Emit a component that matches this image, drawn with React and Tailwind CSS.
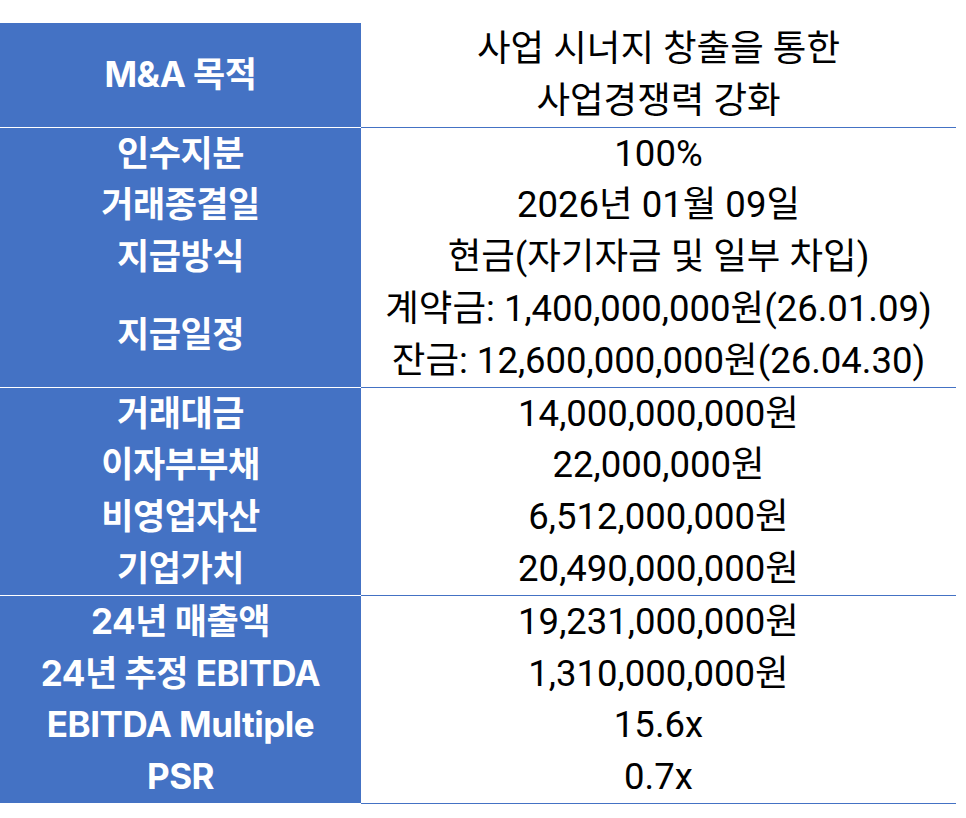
import React from "react";

const sections = [
  {
    label: ["M&A 목적"],
    labelMerged: true,
    values: ["사업 시너지 창출을 통한", "사업경쟁력 강화"],
  },
  {
    rows: [
      ["인수지분", ["100%"]],
      ["거래종결일", ["2026년 01월 09일"]],
      ["지급방식", ["현금(자기자금 및 일부 차입)"]],
      ["지급일정", ["계약금: 1,400,000,000원(26.01.09)", "잔금: 12,600,000,000원(26.04.30)"]],
    ],
  },
  {
    rows: [
      ["거래대금", ["14,000,000,000원"]],
      ["이자부부채", ["22,000,000원"]],
      ["비영업자산", ["6,512,000,000원"]],
      ["기업가치", ["20,490,000,000원"]],
    ],
  },
  {
    rows: [
      ["24년 매출액", ["19,231,000,000원"]],
      ["24년 추정 EBITDA", ["1,310,000,000원"]],
      ["EBITDA Multiple", ["15.6x"]],
      ["PSR", ["0.7x"]],
    ],
  },
];

const labelFont = { fontFamily: "Inter, 'Noto Sans CJK KR', sans-serif" };
const valueFont = { fontFamily: "Roboto, 'Noto Sans CJK KR', sans-serif" };

export default function App() {
  return (
    <div className="bg-white w-[966px] h-[818px] pt-[23px]">
      <div className="w-[956px] leading-[51.8px]">
        {sections.map((s, i) => (
          <div key={i} className="flex">
            <div className="w-[361px] shrink-0 border-b border-white flex flex-col bg-[#4472c4]">
              {s.labelMerged ? (
                <div
                  className="flex-1 flex items-center justify-center text-white font-bold text-[35px] tracking-[-0.5px]"
                  style={labelFont}
                >
                  {s.label[0]}
                </div>
              ) : (
                s.rows.map(([label, values]) => (
                  <div
                    key={label}
                    className="flex items-center justify-center text-white font-bold text-[35px] tracking-[-0.5px]"
                    style={{ ...labelFont, height: `${values.length * 51.8}px` }}
                  >
                    {label}
                  </div>
                ))
              )}
            </div>
            <div
              className="flex-1 border-b border-[#4472c4] flex flex-col items-center text-black text-[36.5px]"
              style={valueFont}
            >
              {(s.labelMerged ? s.values : s.rows.flatMap(([, v]) => v)).map((v) => (
                <div key={v} className="whitespace-nowrap">{v}</div>
              ))}
            </div>
          </div>
        ))}
      </div>
    </div>
  );
}
